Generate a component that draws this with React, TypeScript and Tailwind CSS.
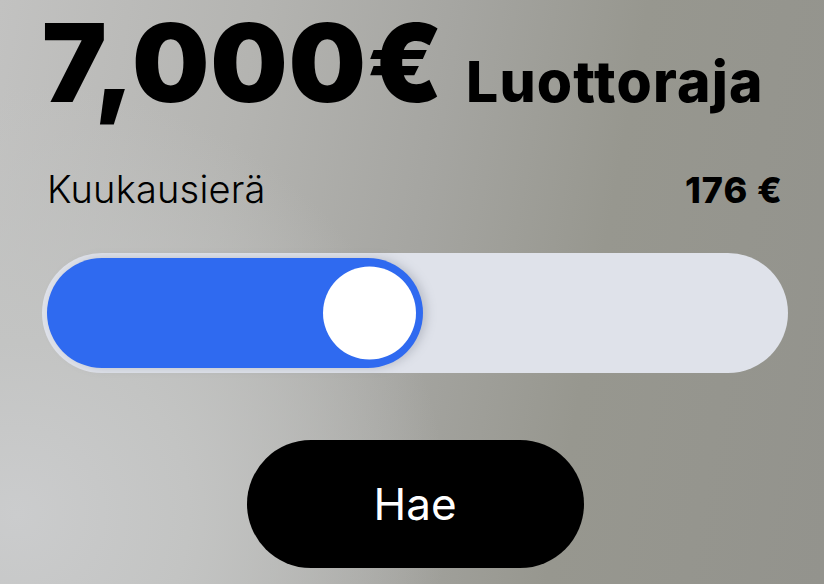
export default function App() {
  return (
    <div
      className="w-[824px] h-[584px] overflow-hidden bg-[radial-gradient(circle_at_2%_88%,#cbcccd_0%,#c3c4c3_18%,rgba(190,190,188,0)_45%),linear-gradient(100deg,#c2c2c1_0%,#b4b4b1_28%,#a5a5a1_50%,#97978f_70%,#93938d_100%)] text-black"
      style={{ fontFamily: 'Inter, "Noto Sans", sans-serif' }}
    >
      <div className="flex flex-col pl-[42px] pr-[36px]">
        <div className="flex items-baseline gap-[22px]">
          <span className="text-[109px] leading-[1.15] font-black tracking-[0.8px]">7,000€</span>
          <span className="text-[57px] leading-[1.15] font-extrabold tracking-[1.2px]">Luottoraja</span>
        </div>

        <div className="mt-[45px] flex items-baseline justify-between px-[5px]">
          <span className="text-[38px] leading-none font-light tracking-[0.2px]">Kuukausierä</span>
          <span className="text-[36px] leading-none font-extrabold tracking-[1px]">176&nbsp;€</span>
        </div>

        <div className="mt-[45px] h-[120px] w-[746px] rounded-full bg-[#dfe2ea] p-[5px] flex">
          <div className="relative h-full w-[376px] rounded-full bg-[#2f6af0] shadow-[4px_0_10px_rgba(120,125,140,0.35)]">
            <div className="absolute right-[7px] top-1/2 -translate-y-1/2 h-[93px] w-[93px] rounded-full bg-white" />
          </div>
        </div>

        <button className="mt-[67px] mx-auto h-[128px] w-[337px] rounded-full bg-black text-white text-[44px] font-normal">
          Hae
        </button>
      </div>
    </div>
  );
}
